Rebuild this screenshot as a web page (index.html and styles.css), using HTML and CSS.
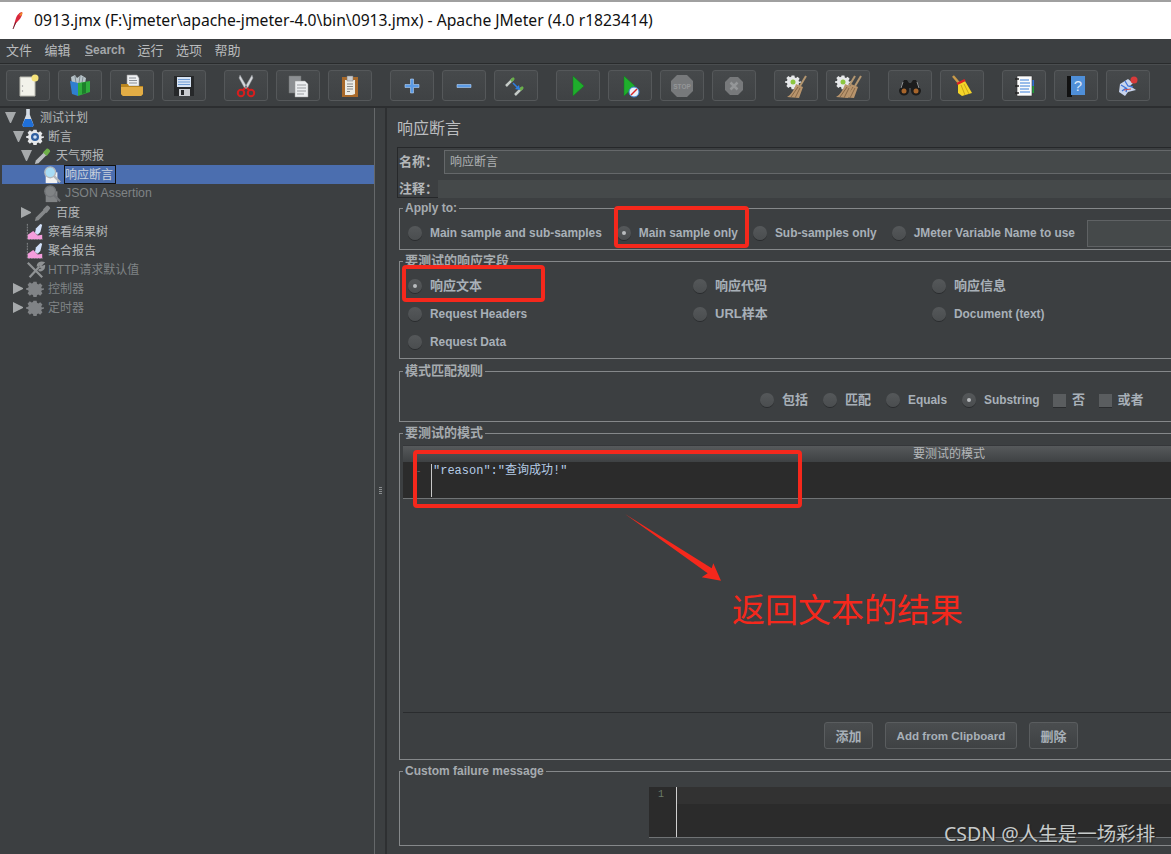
FILE: index.html
```html
<!DOCTYPE html>
<html lang="zh-CN">
<head>
	<meta charset="UTF-8">
	<title>0913.jmx - Apache JMeter</title>
	<link rel="stylesheet" href="styles.css">
</head>
<body>
	<svg class="defs" width="0" height="0">
		<symbol id="gear" viewBox="0 0 20 20">
			<path fill="currentColor" d="M8 1h4l.5 2.600 1.700.7 2.200-1.500 2.800 2.800-1.500 2.200.7 1.700L21 9v2l-2.600.5-.7 1.700 1.500 2.200-2.800 2.800-2.200-1.500-1.700.7L12 20H8l-.5-2.600-1.700-.7-2.200 1.500-2.800-2.800 1.500-2.200-.7-1.700L-1 11V9l2.600-.5.7-1.700-1.500-2.200 2.800-2.800 2.200 1.500 1.700-.7z" transform="translate(1 1) scale(.9)"/>
		</symbol>
		<symbol id="pipette" viewBox="0 0 20 20">
			<path fill="currentColor" d="M1 19l1-4L11 6l3 3-9 9z"/>
			<path fill="var(--tip)" d="M11 5l3-3c1-1 4 1 4 3l-3 4-1 1-4-4z"/>
		</symbol>
		<symbol id="graph" viewBox="0 0 20 20">
			<path fill="none" stroke="#8d9092" d="M1.500 1v17h17" stroke-dasharray="2 1"/>
			<path fill="#f49ddc" d="M2 18v-5l6-4 5 5 5-1v5z"/>
			<path fill="#d2e2fb" d="M10 11l1-5 5-5 2 1-2 8-3 3z"/>
		</symbol>
		<symbol id="lens" viewBox="0 0 20 20">
			<path fill="var(--paper)" d="M3 7h13v12H3z"/>
			<circle cx="8" cy="7" r="6" fill="var(--glass)" stroke="var(--rim)" stroke-width="1.500"/>
			<path stroke="var(--rim)" stroke-width="2.500" d="M12 11l7 7"/>
		</symbol>
		<symbol id="broom" viewBox="0 0 24 24">
			<path fill="#b8946c" d="M12 10l7 3-4 11-12-1c4-2 7-7 9-13z"/>
			<path stroke="#856747" d="M7 23l7-10M11 24l5-10"/>
			<path stroke="#b39670" stroke-width="2" d="M16 12l6-10"/>
		</symbol>
	</svg>

	<header class="titlebar">
		<svg class="feather" viewBox="0 0 12 18"><path fill="#d8263c" d="M1 17L4 7c1-3 4-6 6-6 1 2-1 6-3 8l-3 3z"/><path fill="#f08a2c" d="M7 4l3-3c1 1 0 3-1 4z"/><path stroke="#702030" d="M1 18l3-7"/></svg>
		<span>0913.jmx (F:\jmeter\apache-jmeter-4.0\bin\0913.jmx) - Apache JMeter (4.0 r1823414)</span>
	</header>

	<nav class="menu">
		<a>文件</a><a>编辑</a><a class="latin"><u>S</u>earch</a><a>运行</a><a>选项</a><a>帮助</a>
	</nav>

	<div class="toolbar">
		<div class="tool-group">
			<button class="tool"><svg viewBox="0 0 24 24"><path fill="#f2f2ea" stroke="#b9b9b0" d="M4 3h15v19H4z"/><circle cx="19" cy="4" r="3.500" fill="#f5e27a"/><circle cx="6.500" cy="12" r=".7" fill="#999"/><circle cx="6.500" cy="17" r=".7" fill="#999"/></svg></button>
			<button class="tool"><svg viewBox="0 0 24 24"><path fill="#b7c3c9" d="M3 3l4-2 2 3 4-3 5 3-1 6H4z"/><path stroke="#7f8a90" d="M7 2l1 7M12 2l-1 7M15 3l-1 6"/><path fill="#2f7fd0" d="M2 7l8 2v13l-6-2z"/><path fill="#2fae3c" d="M10 9l12-2v11l-12 4z"/><path fill="#1d7f2b" d="M14 9l4-1v11l-4 1z"/></svg></button>
			<button class="tool"><svg viewBox="0 0 24 24"><path fill="#eef0f2" stroke="#999" stroke-width=".6" d="M7 1h10l2 3v8H7z"/><path stroke="#8a8f96" d="M9 4h7M9 6.500h8M9 9h8"/><path fill="#b9851f" d="M1 10h7l1 2h14v8l-2 2H3l-2-2z"/><path fill="#e3ad45" d="M1 13h22v7l-2 2H3l-2-2z"/></svg></button>
			<button class="tool"><svg viewBox="0 0 24 24"><path fill="#26282a" d="M2 2h20v20H2z"/><path fill="#d6e3f4" d="M5 3h14v10H5z"/><path stroke="#6f9bd2" d="M6 5.500h12M6 8h12M6 10.500h12"/><path fill="#c9ccd0" d="M7 15h11v7H7z"/><path fill="#26282a" d="M9 16h3v5H9z"/></svg></button>
		</div>
		<div class="tool-group">
			<button class="tool"><svg viewBox="0 0 24 24"><path fill="#d5d8dc" stroke="#8a8d90" stroke-width=".5" d="M6 1l7 12-2 2L5 4zM18 1l-7 12 2 2 6-11z"/><g fill="none" stroke="#d81e1e" stroke-width="2"><circle cx="7" cy="19" r="3.200"/><circle cx="17" cy="19" r="3.200"/><path d="M9 16l2-2M15 16l-2-2"/></g></svg></button>
			<button class="tool"><svg viewBox="0 0 24 24"><path fill="#8d9093" stroke="#6d7073" stroke-width=".5" d="M3 2h12v17H3z"/><path fill="#eceef0" stroke="#9a9a9a" stroke-width=".5" d="M9 7h10l3 3v13H9z"/><path stroke="#9a9da0" d="M11 11h9M11 14h9M11 17h9M11 20h7"/></svg></button>
			<button class="tool"><svg viewBox="0 0 24 24"><path fill="#a8692a" d="M4 3h16v20H4z"/><path fill="#ecece6" d="M7 6h10v14l-3 1H7z"/><path fill="#c9ccd0" stroke="#777" stroke-width=".5" d="M9 2h6v5H9z"/><path stroke="#888" d="M9 10h6M9 12.500h6M9 15h6M9 17.500h3"/></svg></button>
		</div>
		<div class="tool-group">
			<button class="tool"><svg viewBox="0 0 24 24"><path fill="#5b9be6" stroke="#b7d3f5" stroke-width=".6" d="M10.500 5h3v5.500H19v3h-5.500V19h-3v-5.500H5v-3h5.500z"/></svg></button>
			<button class="tool"><svg viewBox="0 0 24 24"><path fill="#5b9be6" stroke="#b7d3f5" stroke-width=".6" d="M5 10.500h14v3H5z"/></svg></button>
			<button class="tool"><svg viewBox="0 0 24 24"><path stroke="#c5cbc8" stroke-width="2.500" d="M2 12l7-7M11 21l7-7"/><path stroke="#69b04a" stroke-width="2.500" d="M7 7l3-3M16 16l3-3"/><path stroke="#2f7fe0" stroke-width="1.500" d="M9 9l5 5"/><path fill="#2f7fe0" d="M16 16l-1-5-4 4z"/></svg></button>
		</div>
		<div class="tool-group">
			<button class="tool"><svg viewBox="0 0 24 24"><path fill="#1fae2c" stroke="#0e7f1c" stroke-width=".5" d="M7 2l11 10L7 22z"/></svg></button>
			<button class="tool"><svg viewBox="0 0 24 24"><path fill="#1fae2c" stroke="#0e7f1c" stroke-width=".5" d="M6 2l11 10L6 22z"/><circle cx="16" cy="18" r="5" fill="#e8f0fa" stroke="#3b7fd0"/><path stroke="#d92525" stroke-width="1.500" d="M13 21l6-6"/></svg></button>
			<button class="tool"><svg viewBox="0 0 24 24"><path fill="#77797b" d="M7 1h10l6 6v10l-6 6H7l-6-6V7z"/><text x="12" y="15" class="stop-text">STOP</text></svg></button>
			<button class="tool"><svg viewBox="0 0 24 24"><path fill="#77797b" d="M8 3h8l5 5v8l-5 5H8l-5-5V8z"/><path stroke="#949698" stroke-width="2.500" d="M8.500 8.500l7 7M15.500 8.500l-7 7"/></svg></button>
		</div>
		<div class="tool-group">
			<button class="tool"><svg viewBox="0 0 24 24"><use href="#gear" x="1" y="0" width="16" height="16" class="icon-white"/><circle cx="9" cy="8" r="2.500" fill="#8cc63f"/><use href="#broom"/></svg></button>
			<button class="tool"><svg viewBox="0 0 24 24"><use href="#gear" x="-1" y="0" width="16" height="16" class="icon-white"/><circle cx="7" cy="8" r="2.500" fill="#8cc63f"/><use href="#broom" x="3"/><use href="#broom" x="-3"/></svg></button>
		</div>
		<div class="tool-group">
			<button class="tool"><svg viewBox="0 0 24 24"><path fill="#1c1c1c" d="M6 6h3l2 3h2l2-3h3l5 10a5 5 0 0 1-10 1v-3h-2v3a5 5 0 0 1-10-1z"/><path stroke="#8d9092" d="M5 8l-2 6M19 8l2 6"/><circle cx="6" cy="17" r="2.500" fill="#a8652b"/><circle cx="18" cy="17" r="2.500" fill="#a8652b"/></svg></button>
			<button class="tool"><svg viewBox="0 0 24 24"><path stroke="#c99a4a" stroke-width="2.500" d="M3 2l6 7"/><path fill="#f4d428" d="M8 10l7-3 7 12-10 3-4-3z"/><path stroke="#c9a41a" d="M11 11l4 10M14 10l5 10"/><path stroke="#d22" stroke-width="2.500" d="M7 10l8-4"/></svg></button>
		</div>
		<div class="tool-group">
			<button class="tool"><svg viewBox="0 0 24 24"><path fill="#1f9a3a" d="M18 12h4v7h-4z"/><path fill="#2f6fd0" d="M18 6h4v6h-4z"/><path fill="#fbfbfb" stroke="#333" stroke-width=".6" d="M5 2h15v20H5z"/><path stroke="#3a7fd8" d="M8 6h9M8 9h10M8 12h10M8 15h9M8 18h10"/><path stroke="#222" stroke-width="1.500" d="M3 5h4M3 12h4M3 19h4"/></svg></button>
			<button class="tool"><svg viewBox="0 0 24 24"><path fill="#111" d="M3 2h5v21H3z"/><path fill="#4f8fd8" d="M7 2h14v19H7z"/><text x="14" y="17" class="help-text">?</text></svg></button>
			<button class="tool"><svg viewBox="0 0 24 24"><path fill="#c8d4ec" d="M4 10l8-5 5 4-3 3 6 4-8 2-3 4-6-4z"/><path stroke="#3f73d8" stroke-width="1.300" fill="none" d="M5 11l5 3-4 3M9 7l3 5 5 1M10 18l1-4"/><path stroke="#d04a4a" d="M8 16l7-1"/><circle cx="18" cy="6" r="3.500" fill="#d83a3a"/></svg></button>
		</div>
	</div>

	<main class="main">
		<aside class="tree">
			<div class="node lv-0"><i class="toggle open"></i><svg class="node-icon" viewBox="0 0 20 20" preserveAspectRatio="none"><path fill="#d5dce5" d="M7 0h6v6l6 11c.5 2-1 3-2 3H3c-1 0-2.500-1-2-3L7 6z"/><path fill="#1f6fd8" d="M5 11h10l4 6c.5 2-1 3-2 3H3c-1 0-2.500-1-2-3z"/></svg><span class="label">测试计划</span></div>
			<div class="node lv-1"><i class="toggle open"></i><svg class="node-icon big gear-white"><use href="#gear"/><circle cx="9" cy="9" r="4" fill="#2f5f9f"/><circle cx="9" cy="9" r="1.800" fill="#cfe0f5"/></svg><span class="label">断言</span></div>
			<div class="node lv-2"><i class="toggle open"></i><svg class="node-icon big pipe-green"><use href="#pipette"/></svg><span class="label">天气预报</span></div>
			<div class="node lv-3 selected"><i class="toggle"></i><svg class="node-icon big lens-on"><use href="#lens"/></svg><span class="label">响应断言</span></div>
			<div class="node lv-3 off"><i class="toggle"></i><svg class="node-icon big lens-off"><use href="#lens"/></svg><span class="label label-en">JSON Assertion</span></div>
			<div class="node lv-2"><i class="toggle closed"></i><svg class="node-icon big pipe-gray"><use href="#pipette"/></svg><span class="label">百度</span></div>
			<div class="node lv-1"><i class="toggle"></i><svg class="node-icon big"><use href="#graph"/></svg><span class="label">察看结果树</span></div>
			<div class="node lv-1"><i class="toggle"></i><svg class="node-icon big"><use href="#graph"/></svg><span class="label">聚合报告</span></div>
			<div class="node lv-1 off"><i class="toggle"></i><svg class="node-icon big" viewBox="0 0 20 20"><path stroke="#8f9294" stroke-width="2.500" d="M2 2l16 16M4 18L15 6"/><path fill="none" stroke="#8f9294" stroke-width="2.500" d="M13 6c0-3 3-5 6-4l-3 3 1 2 3-1c0 3-3 5-6 4"/></svg><span class="label">HTTP请求默认值</span></div>
			<div class="node lv-1 off"><i class="toggle closed"></i><svg class="node-icon big gear-gray"><use href="#gear"/></svg><span class="label">控制器</span></div>
			<div class="node lv-1 off"><i class="toggle closed"></i><svg class="node-icon big gear-gray"><use href="#gear"/></svg><span class="label">定时器</span></div>
		</aside>

		<div class="splitter"><i class="grip"></i></div>

		<section class="pane">
			<div class="pane-in">
				<h1 class="pane-title">响应断言</h1>
				<div class="name-box">
					<div class="name-row"><label>名称：</label><div class="name-input">响应断言</div></div>
					<div class="note-row"><label>注释：</label><div class="note-input"></div></div>
				</div>

				<div class="fields">
					<fieldset class="group group-apply">
						<legend>Apply to:</legend>
						<div class="line">
							<span class="opt"><i class="radio"></i>Main sample and sub-samples</span>
							<span class="opt"><i class="radio on"></i>Main sample only</span>
							<span class="opt"><i class="radio"></i>Sub-samples only</span>
							<span class="opt"><i class="radio"></i>JMeter Variable Name to use</span>
							<div class="var-input"></div>
						</div>
					</fieldset>

					<fieldset class="group group-field">
						<legend class="zh">要测试的响应字段</legend>
						<div class="grid">
							<span class="opt zh"><i class="radio on"></i>响应文本</span>
							<span class="opt zh"><i class="radio"></i>响应代码</span>
							<span class="opt zh"><i class="radio"></i>响应信息</span>
							<span class="opt"><i class="radio"></i>Request Headers</span>
							<span class="opt zh"><i class="radio"></i>URL样本</span>
							<span class="opt"><i class="radio"></i>Document (text)</span>
							<span class="opt"><i class="radio"></i>Request Data</span>
						</div>
					</fieldset>

					<fieldset class="group group-rule">
						<legend class="zh">模式匹配规则</legend>
						<div class="line line-rule">
							<span class="opt zh"><i class="radio"></i>包括</span>
							<span class="opt zh"><i class="radio"></i>匹配</span>
							<span class="opt"><i class="radio"></i>Equals</span>
							<span class="opt"><i class="radio on"></i>Substring</span>
							<span class="opt opt-check zh"><i class="check"></i>否</span>
							<span class="opt opt-check zh"><i class="check"></i>或者</span>
						</div>
					</fieldset>

					<fieldset class="group group-pattern">
						<legend class="zh">要测试的模式</legend>
						<div class="table">
							<div class="table-head">要测试的模式</div>
							<div class="pattern-edit">
								<span class="gutter">-</span>
								<span class="code">"reason":"查询成功!"</span>
							</div>
							<div class="table-blank"></div>
						</div>
						<div class="actions">
							<button class="btn zh">添加</button>
							<button class="btn">Add from Clipboard</button>
							<button class="btn zh">删除</button>
						</div>
					</fieldset>

					<fieldset class="group group-fail">
						<legend>Custom failure message</legend>
						<div class="fail-edit">
							<div class="fail-gutter">1</div>
							<div class="fail-text"><div class="fail-current"></div></div>
						</div>
					</fieldset>
				</div>
			</div>
		</section>
	</main>

	<!-- 截图上后加的标注 -->
	<div class="mark mark-1"></div>
	<div class="mark mark-2"></div>
	<div class="mark mark-3"></div>
	<svg class="mark-arrow" viewBox="0 0 100 70"><path fill="#f5281c" d="M0 0l86.700 54.300 1.600-5L96 66.700l-19.300-3.400 6-4z"/></svg>
	<div class="mark-text">返回文本的结果</div>
	<div class="watermark">CSDN @人生是一场彩排</div>
</body>
</html>
```

FILE: styles.css
```css
*{
	margin: 0;
	padding: 0;
	box-sizing: border-box;
}
html,body{
	width: 1171px;
	height: 854px;
	overflow: hidden;
}
body{
	position: relative;
	display: flex;
	flex-direction: column;
	background-color: #3c3f41;
	color: #b4b7b9;
	font-family: "Liberation Sans", "Noto Sans CJK SC", sans-serif;
	font-size: 12px;
}
.defs{
	position: absolute;
}
svg{
	display: block;
	overflow: visible;
}

/* 标题栏 */
.titlebar{
	display: flex;
	align-items: center;
	height: 39px;
	padding: 0 0 2px 12px;
	background-color: #fff;
	border-top: 2px solid #a0a0a0;
	color: #111;
	font-family: "Noto Sans", "Noto Sans CJK SC", sans-serif;
	font-size: 15.7px;
}
.feather{
	width: 12px;
	height: 18px;
	margin-right: 10px;
}

/* 菜单 */
.menu{
	display: flex;
	align-items: center;
	gap: 12.5px;
	height: 25px;
	padding: 0 0 4px 6px;
	border-bottom: 1px solid #292b2c;
	font-size: 13px;
	color: #b9bbbd;
}
.menu .latin{
	font-weight: bold;
	font-size: 12px;
	margin: 2px 0 0 2px;
	color: #a3a7aa;
}

/* 工具栏 */
.toolbar{
	display: flex;
	gap: 18px;
	height: 44px;
	padding: 5px 6px 0;
	border-bottom: 2px solid #2c2e30;
	border-top: 1px solid #4a4d4f;
}
.tool-group{
	display: flex;
	gap: 8px;
}
.tool{
	display: flex;
	align-items: center;
	justify-content: center;
	width: 44px;
	height: 31px;
	background: linear-gradient(#46494b, #3f4244);
	border: 1px solid #55585a;
	border-radius: 3px;
}
.tool svg{
	width: 24px;
	height: 24px;
}
.stop-text{
	font-size: 6.5px;
	font-weight: bold;
	fill: #949698;
	text-anchor: middle;
}
.help-text{
	font-size: 15px;
	fill: #dbe8f8;
	text-anchor: middle;
}
.icon-white,.gear-white{
	color: #e6e8ea;
}

/* 主体 */
.main{
	display: flex;
	flex: 1;
	min-height: 0;
}
.tree{
	width: 373px;
	margin-left: 2px;
	flex-shrink: 0;
	border-right: 1px solid #65686a;
}
.node{
	display: flex;
	align-items: center;
	height: 19px;
}
.lv-0{ padding-left: 3px; }
.lv-1{ padding-left: 11px; }
.lv-2{ padding-left: 19px; }
.lv-3{ padding-left: 28px; }
.toggle{
	width: 12px;
	height: 11px;
	margin-right: 1px;
	flex-shrink: 0;
}
.toggle.open{
	width: 11px;
	margin-right: 2px;
	border-style: solid;
	border-width: 11px 5.5px 0;
	border-color: #a6a9ab transparent transparent;
}
.toggle.closed{
	width: 10px;
	margin-right: 3px;
	border-style: solid;
	border-width: 5.5px 0 5.5px 10px;
	border-color: transparent transparent transparent #a6a9ab;
}
.node-icon{
	width: 18px;
	height: 18px;
	margin-right: 3px;
	flex-shrink: 0;
}
.lv-0 .node-icon{
	width: 12px;
	height: 18px;
	margin: 0 5px 0 4px;
}
.label{
	padding: 1px 2px 0 0;
	border: 1px solid transparent;
	line-height: 16px;
	white-space: nowrap;
}
.label-en{
	padding: 0 0 1px;
	font-size: 12.3px;
}
.off .label{
	color: #7f8385;
}
.selected{
	background-color: #4b6eaf;
}
.selected .label{
	border-color: #111;
	color: #c9d2de;
}
.gear-gray{
	color: #808386;
}
.pipe-green{
	color: #b9bcbe;
	--tip: #6fb04a;
}
.pipe-gray{
	color: #85888a;
	--tip: #85888a;
}
.lens-on{
	--paper: #f2f2f2;
	--glass: #a8dcf5;
	--rim: #b4b8bc;
}
.lens-off{
	--paper: #808385;
	--glass: #808385;
	--rim: #727578;
}
.splitter{
	display: flex;
	align-items: center;
	justify-content: center;
	width: 10px;
	flex-shrink: 0;
}
.grip{
	display: block;
	width: 3px;
	height: 8px;
	margin-top: 20px;
	background: repeating-linear-gradient(#8a8d8f 0 1px, transparent 1px 2px);
}
.pane{
	flex: 1;
	min-width: 0;
	overflow: hidden;
	border-left: 2px solid #2e3032;
}
.pane-in{
	width: 1130px;
	padding-left: 10px;
}
.pane-title{
	height: 39px;
	padding-top: 9px;
	font-size: 16px;
	line-height: 24px;
	font-weight: normal;
	color: #bcbec0;
}
.name-box{
	height: 51px;
	border: 1px solid #26282a;
	border-right: 0;
	padding-top: 1px;
}
.name-row{
	display: flex;
	align-items: center;
	height: 25px;
}
.note-row{
	display: flex;
	align-items: center;
	height: 19px;
	margin-top: 5px;
}
.name-box label{
	width: 46px;
	padding: 0 0 2px 1px;
	font-size: 13px;
	font-weight: bold;
	color: #b4b7b9;
}
.name-box .note-row label{
	width: 40px;
}
.name-input{
	flex: 1;
	height: 24px;
	padding: 0 5px;
	line-height: 22px;
	background-color: #45494a;
	border: 1px solid #65686a;
	color: #aeb1b3;
}
.note-input{
	flex: 1;
	height: 18px;
	background-color: #45494a;
}
.fields{
	display: flex;
	flex-direction: column;
	gap: 4px;
	margin: 3px 0 0 2px;
}
.group{
	border: 1px solid #85888a;
	padding: 0;
}
.group legend{
	margin-left: 3px;
	padding: 0 2px;
	line-height: 14px;
	font-size: 12px;
	font-weight: bold;
	color: #a6abaf;
}
.group legend.zh{
	font-size: 13px;
}
.group-apply{ height: 49px; }
.group-field{ height: 105px; margin-bottom: 1px; }
.group-rule{ height: 58px; }
.group-pattern{ height: 334px; }
.group-fail{ height: 82px; }
.line{
	display: flex;
	align-items: center;
	gap: 15px;
	height: 24px;
	margin-top: 6px;
	padding-left: 8px;
}
.line-rule{
	margin-top: 10px;
	padding-left: 360px;
}
.opt{
	display: flex;
	align-items: center;
	gap: 8px;
	white-space: nowrap;
	font-size: 11.9px;
	font-weight: bold;
	color: #a8b0b8;
}
.opt.zh{
	font-size: 13px;
	line-height: 16px;
}
.opt-check{
	gap: 6px;
	margin-left: -1.5px;
}
.opt > i{
	flex-shrink: 0;
}
.radio{
	display: block;
	width: 14px;
	height: 14px;
	border-radius: 50%;
	background: linear-gradient(#55585a, #4a4d4f);
	box-shadow: 0 1px 0 #2a2c2e;
	position: relative;
}
.radio.on::after{
	content: "";
	position: absolute;
	left: 5px;
	top: 5px;
	width: 4px;
	height: 4px;
	border-radius: 50%;
	background-color: #b9bcbe;
}
.check{
	display: block;
	width: 13px;
	height: 13px;
	background-color: #5a5d5f;
	box-shadow: 0 1px 0 #2a2c2e;
}
.var-input{
	width: 200px;
	height: 27px;
	margin-left: -3px;
	background-color: #45494a;
	border: 1px solid #5f6264;
}
.grid{
	display: grid;
	grid-template-columns: 285px 239px 1fr;
	grid-auto-rows: 28px;
	margin-top: 4px;
	padding-left: 8px;
}
.table{
	width: 1092px;
	margin: 5px 0 0 3px;
}
.table-head{
	height: 17px;
	line-height: 17px;
	text-align: center;
	background: linear-gradient(#56595b, #3e4143);
	border-top: 1px solid #35373a;
	color: #b4b7b9;
}
.pattern-edit{
	display: flex;
	height: 37px;
	background-color: #2b2b2b;
	border-bottom: 1px solid #707375;
}
.gutter{
	width: 28px;
	padding: 3px 0 0 14px;
	color: #5f6264;
	font-size: 10px;
}
.code{
	flex: 1;
	height: 33px;
	margin-top: 2px;
	padding-left: 1px;
	border-left: 1px solid #c8c8c8;
	font-family: "Liberation Mono", "Noto Sans CJK SC", monospace;
	font-size: 12px;
	line-height: 14px;
	color: #b5cbe6;
}
.table-blank{
	height: 214px;
	border-bottom: 1px solid #2a2c2e;
}
.actions{
	display: flex;
	justify-content: center;
	gap: 12px;
	width: 1096px;
	margin: 9px 0 0 3px;
}
.btn{
	height: 27px;
	padding: 0 10.5px;
	background: linear-gradient(#4a4d4f, #3f4244);
	border: 1px solid #5a5d5f;
	border-radius: 3px;
	font-family: inherit;
	font-size: 11.6px;
	font-weight: bold;
	color: #a8b0b8;
}
.btn.zh{
	font-size: 13px;
}
.fail-edit{
	display: flex;
	height: 51px;
	margin: 9px 0 0 249px;
	background-color: #2b2b2b;
	border-bottom: 1px solid #707375;
}
.fail-gutter{
	width: 27px;
	padding: 2px 0 0 9px;
	font-family: "Liberation Mono", monospace;
	font-size: 10px;
	color: #6a7a6a;
}
.fail-text{
	flex: 1;
	border-left: 1px solid #d0d0d0;
}
.fail-current{
	height: 17px;
	background-color: #323232;
}

/* 标注 */
.mark{
	position: absolute;
	border: 4px solid #f5281c;
	border-radius: 4px;
}
.mark-1{
	left: 614px;
	top: 206px;
	width: 135px;
	height: 42px;
}
.mark-2{
	left: 402px;
	top: 265px;
	width: 143px;
	height: 37px;
}
.mark-3{
	left: 413px;
	top: 450px;
	width: 389px;
	height: 58px;
}
.mark-arrow{
	position: absolute;
	left: 625px;
	top: 514px;
	width: 100px;
	height: 70px;
}
.mark-text{
	position: absolute;
	left: 732px;
	top: 586px;
	font-family: "Noto Sans CJK SC", sans-serif;
	font-size: 33px;
	line-height: 44px;
	color: #f5281c;
}
.watermark{
	position: absolute;
	left: 944px;
	top: 821px;
	font-family: "Noto Sans", "Noto Sans CJK SC", sans-serif;
	font-size: 19.5px;
	line-height: 26px;
	color: #c6caca;
	text-shadow: 1px 1px 1px #222;
}
```
